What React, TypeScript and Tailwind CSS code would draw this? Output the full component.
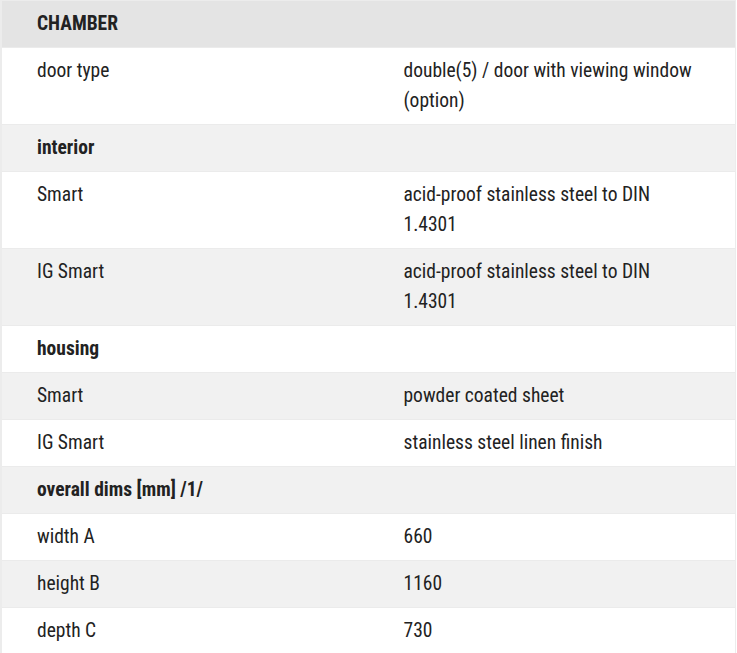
import React from "react";

type Row = { a: string; b?: string; kind: "head" | "group" | "row" };

const rows: Row[] = [
  { a: "CHAMBER", kind: "head" },
  { a: "door type", b: "double(5) / door with viewing window (option)", kind: "row" },
  { a: "interior", kind: "group" },
  { a: "Smart", b: "acid-proof stainless steel to DIN 1.4301", kind: "row" },
  { a: "IG Smart", b: "acid-proof stainless steel to DIN 1.4301", kind: "row" },
  { a: "housing", kind: "group" },
  { a: "Smart", b: "powder coated sheet", kind: "row" },
  { a: "IG Smart", b: "stainless steel linen finish", kind: "row" },
  { a: "overall dims [mm] /1/", kind: "group" },
  { a: "width A", b: "660", kind: "row" },
  { a: "height B", b: "1160", kind: "row" },
  { a: "depth C", b: "730", kind: "row" },
];

export default function App() {
  return (
    <div className="bg-white w-[737px] h-[653px] overflow-hidden">
      <div
        className="w-[736px] border-l-2 border-r border-t border-[#ececec] text-[#222] text-[19.5px] leading-[30px] font-stretch-condensed"
        style={{ fontFamily: "Roboto, 'Liberation Sans', sans-serif" }}
      >
        {rows.map((r, i) => {
          const bg =
            r.kind === "head" ? "bg-[#e4e4e4]" : i % 2 === 1 ? "bg-white" : "bg-[#f1f1f1]";
          const weight = r.kind === "row" ? "font-normal" : "font-bold";
          return (
            <div
              key={i}
              className={`grid grid-cols-2 border-b border-[#ebebeb] ${bg}`}
            >
              <div className={`pl-[35px] pr-[35px] pt-2 pb-2 ${weight}`}>{r.a}</div>
              <div className="pl-[35px] pr-[35px] pt-2 pb-2">{r.b ?? ""}</div>
            </div>
          );
        })}
      </div>
    </div>
  );
}
